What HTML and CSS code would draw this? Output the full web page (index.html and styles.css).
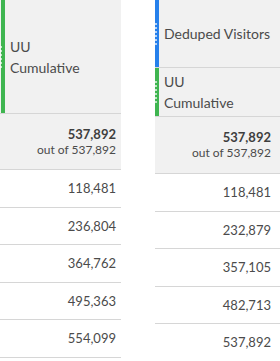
FILE: index.html
```html
<!DOCTYPE html>
<html>
<head>
<meta charset="utf-8">
<link rel="stylesheet" href="styles.css">
</head>
<body>
<div class="wrap">
  <div class="col col-left">
    <div class="head head-tall">
      <div class="bar bar-green"><span class="grip"></span></div>
      <div class="title">UU<br>Cumulative</div>
    </div>
    <div class="total total-left">
      <div class="total-num">537,892</div>
      <div class="total-of">out of 537,892</div>
    </div>
    <div class="row">118,481</div>
    <div class="row">236,804</div>
    <div class="row">364,762</div>
    <div class="row">495,363</div>
    <div class="row">554,099</div>
  </div>
  <div class="col col-right">
    <div class="head head-blue">
      <div class="bar bar-blue"><span class="grip"></span></div>
      <div class="title">Deduped Visitors</div>
    </div>
    <div class="head head-green">
      <div class="bar bar-green"><span class="grip"></span></div>
      <div class="title">UU<br>Cumulative</div>
    </div>
    <div class="total total-right">
      <div class="total-num">537,892</div>
      <div class="total-of">out of 537,892</div>
    </div>
    <div class="row">118,481</div>
    <div class="row">232,879</div>
    <div class="row">357,105</div>
    <div class="row">482,713</div>
    <div class="row">537,892</div>
  </div>
</div>
</body>
</html>
```
FILE: styles.css
```css
html, body {
  margin: 0;
  padding: 0;
  background: #ffffff;
}
body {
  font-family: Lato, "Liberation Sans", sans-serif;
  color: #4b4b4b;
  width: 280px;
  height: 361px;
  overflow: hidden;
}
.wrap {
  display: flex;
  align-items: flex-start;
}
.col {
  display: flex;
  flex-direction: column;
}
.col-left {
  width: 121px;
  flex: none;
}
.col-right {
  margin-left: 34px;
  flex: 1;
}
.head {
  display: flex;
  align-items: stretch;
  background: #f1f1f1;
  border-bottom: 1px solid #d6d6d6;
  box-sizing: border-box;
}
.head-tall { height: 114px; }
.head-blue { height: 68px; }
.head-green { height: 49px; }
.bar {
  width: 4px;
  flex: none;
  display: flex;
  align-items: center;
}
.col-left .bar { margin-left: 1px; }
.bar-green { background: #3fb550; }
.bar-blue { background: #2680eb; }
.grip {
  display: block;
  width: 2px;
  height: 22px;
  background: repeating-linear-gradient(to bottom, rgba(255,255,255,0.65) 0 2px, transparent 2px 4px);
}
.col-left .grip { margin-left: -1px; }
.title {
  display: flex;
  align-items: center;
  padding-left: 5px;
  font-size: 14px;
  line-height: 21px;
}
.total {
  background: #f1f1f1;
  border-bottom: 1px solid #d6d6d6;
  box-sizing: border-box;
  display: flex;
  flex-direction: column;
  justify-content: center;
  align-items: flex-end;
  line-height: 16px;
}
.total-left { height: 56px; padding-right: 5px; }
.total-right { height: 57px; padding-right: 9px; }
.total-num {
  font-size: 13px;
  font-weight: bold;
  color: #3e3e3e;
}
.total-of {
  font-size: 12px;
}
.row {
  height: 37.5px;
  box-sizing: border-box;
  border-bottom: 1px solid #d6d6d6;
  display: flex;
  align-items: center;
  justify-content: flex-end;
  font-size: 13px;
}
.col-left .row { padding-right: 5px; }
.col-right .row { padding-right: 9px; }
```
